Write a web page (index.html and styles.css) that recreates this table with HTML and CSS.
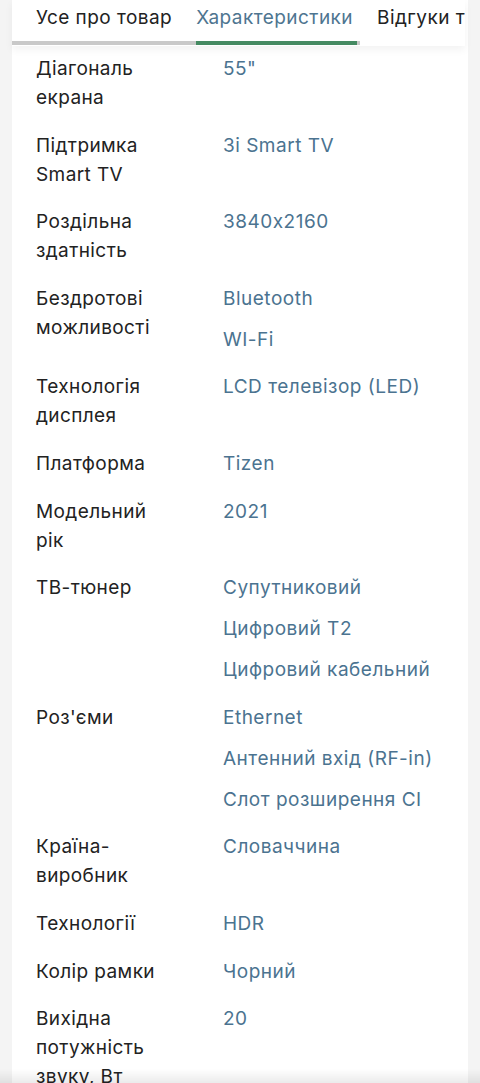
FILE: index.html
```html
<!DOCTYPE html>
<html lang="uk">
<head>
<meta charset="utf-8">
<link rel="stylesheet" href="styles.css">
</head>
<body>
<div class="card">
  <nav class="tabs">
    <div class="tab-row">
      <span class="tab">Усе про товар</span>
      <span class="tab active">Характеристики</span>
      <span class="tab">Відгуки та питання</span>
    </div>
    <div class="track"><div class="indicator"></div></div>
  </nav>
  <dl class="specs">
    <div class="row"><dt>Діагональ екрана</dt><dd><span>55"</span></dd></div>
    <div class="row"><dt>Підтримка Smart TV</dt><dd><span>Зі Smart TV</span></dd></div>
    <div class="row"><dt>Роздільна здатність</dt><dd><span>3840x2160</span></dd></div>
    <div class="row"><dt>Бездротові можливості</dt><dd><span>Bluetooth</span><span>WI-Fi</span></dd></div>
    <div class="row"><dt>Технологія дисплея</dt><dd><span>LCD телевізор (LED)</span></dd></div>
    <div class="row"><dt>Платформа</dt><dd><span>Tizen</span></dd></div>
    <div class="row"><dt>Модельний рік</dt><dd><span>2021</span></dd></div>
    <div class="row"><dt>ТВ-тюнер</dt><dd><span>Супутниковий</span><span>Цифровий T2</span><span>Цифровий кабельний</span></dd></div>
    <div class="row"><dt>Роз'єми</dt><dd><span>Ethernet</span><span>Антенний вхід (RF-in)</span><span>Слот розширення CI</span></dd></div>
    <div class="row"><dt>Країна-виробник</dt><dd><span>Словаччина</span></dd></div>
    <div class="row"><dt>Технології</dt><dd><span>HDR</span></dd></div>
    <div class="row"><dt>Колір рамки</dt><dd><span>Чорний</span></dd></div>
    <div class="row"><dt>Вихідна потужність звуку, Вт</dt><dd><span>20</span></dd></div>
  </dl>
</div>
<div class="bottom-shade"></div>
</body>
</html>
```

FILE: styles.css
```css
html, body {
  margin: 0;
  padding: 0;
  background: #f4f4f4;
  height: 1083px;
  overflow: hidden;
}
body {
  font-family: Inter, "Noto Sans", sans-serif;
  color: #222222;
}
.card {
  margin: 0 12px;
  background: #ffffff;
  min-height: 1083px;
}
.tabs {
  background: #ffffff;
  width: 453px;
  overflow: hidden;
  box-shadow: 0 4px 8px rgba(0,0,0,0.05);
  position: relative;
}
.tab-row {
  display: flex;
  gap: 24px;
  padding: 5px 0 0 24px;
  white-space: nowrap;
  height: 36px;
}
.tab {
  font-size: 19px;
  line-height: 26px;
  letter-spacing: 0.45px;
  color: #222222;
  flex-shrink: 0;
}
.tab.active {
  color: #4e7590;
}
.track {
  width: 348px;
  height: 4px;
  background: #c9c9c9;
  display: flex;
  justify-content: flex-end;
  margin-bottom: 1px;
}
.indicator {
  width: 161px;
  height: 4px;
  margin-right: 3px;
  background: #458a62;
}
.specs {
  margin: 0;
  padding: 8px 0 0 24px;
}
.row {
  display: grid;
  grid-template-columns: 187px 1fr;
  padding-bottom: 18.6px;
}
dt {
  font-size: 19px;
  line-height: 29px;
  letter-spacing: 0.4px;
  color: #222222;
  width: 140px;
}
dd {
  margin: 0;
  display: flex;
  flex-direction: column;
  gap: 12px;
  font-size: 19px;
  line-height: 29px;
  letter-spacing: 0.5px;
  color: #4b7390;
}
.bottom-shade {
  position: fixed;
  left: 0;
  right: 0;
  bottom: 0;
  height: 14px;
  background: linear-gradient(to bottom, rgba(0,0,0,0), rgba(0,0,0,0.08));
}
```
